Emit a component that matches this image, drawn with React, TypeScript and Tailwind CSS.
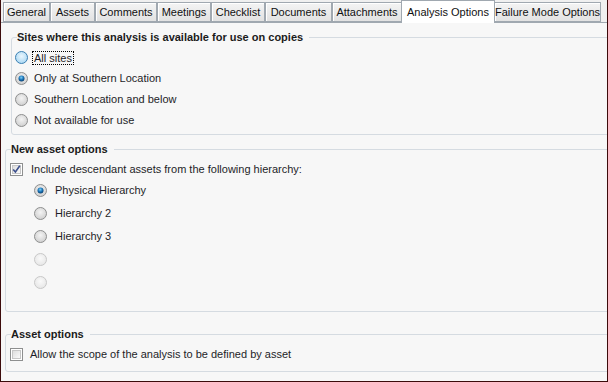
import React from "react";

const tabs = [
  { name: "General", w: 47 },
  { name: "Assets", w: 45 },
  { name: "Comments", w: 62 },
  { name: "Meetings", w: 54 },
  { name: "Checklist", w: 54 },
  { name: "Documents", w: 67 },
  { name: "Attachments", w: 70 },
  { name: "Analysis Options", w: 94 },
  { name: "Failure Mode Options", w: 107 },
];

type RadioState = "normal" | "checked" | "hover" | "disabled";

function Radio({ state }: { state: RadioState }) {
  const ring =
    state === "hover" ? "#3c7fb1" : state === "disabled" ? "#c8c8c8" : "#8e8f8f";
  const inner =
    state === "hover" ? "url(#rh)" : state === "disabled" ? "url(#rd)" : "url(#rn)";
  return (
    <svg width="13" height="13" viewBox="0 0 13 13" className="shrink-0">
      <defs>
        <radialGradient id="rn" cx="50%" cy="40%" r="60%">
          <stop offset="0%" stopColor="#f4f4f4" />
          <stop offset="100%" stopColor="#cfcfcf" />
        </radialGradient>
        <radialGradient id="rh" cx="50%" cy="40%" r="60%">
          <stop offset="0%" stopColor="#eaf6fd" />
          <stop offset="100%" stopColor="#a9d7f3" />
        </radialGradient>
        <radialGradient id="rd" cx="50%" cy="40%" r="60%">
          <stop offset="0%" stopColor="#fafafa" />
          <stop offset="100%" stopColor="#e6e6e6" />
        </radialGradient>
        <radialGradient id="rc" cx="45%" cy="35%" r="65%">
          <stop offset="0%" stopColor="#7fd0f7" />
          <stop offset="55%" stopColor="#1a74b8" />
          <stop offset="100%" stopColor="#0a3d6b" />
        </radialGradient>
      </defs>
      <circle cx="6.5" cy="6.5" r="6" fill={inner} stroke={ring} strokeWidth="1" />
      {state === "checked" && <circle cx="6.5" cy="6.5" r="3" fill="url(#rc)" />}
    </svg>
  );
}

function Checkbox({ checked }: { checked?: boolean }) {
  return (
    <svg width="13" height="13" viewBox="0 0 13 13" className="shrink-0">
      <defs>
        <linearGradient id="cb" x1="0" y1="0" x2="1" y2="1">
          <stop offset="0%" stopColor="#dcdcdc" />
          <stop offset="100%" stopColor="#fbfbfb" />
        </linearGradient>
      </defs>
      <rect x="0.5" y="0.5" width="12" height="12" fill="#fff" stroke="#8e8f8f" />
      <rect x="2.5" y="2.5" width="8" height="8" fill="url(#cb)" stroke="#c6c6c6" />
      {checked && (
        <path d="M3.2 6.4 L5.4 9 L9.8 2.8" fill="none" stroke="#3c4f8c" strokeWidth="1.6" />
      )}
    </svg>
  );
}

function Group({
  title,
  className,
  children,
}: {
  title: string;
  className: string;
  children: React.ReactNode;
}) {
  return (
    <fieldset className={`border border-[#d5dbe1] rounded-[3px] -mr-4 ${className}`}>
      <legend className="ml-[5px] pr-[6px] font-bold text-[11px] leading-[14px] text-[#1b1b1b]">
        {title}
      </legend>
      {children}
    </fieldset>
  );
}

export default function App() {
  return (
    <div
      className="w-[608px] h-[382px] bg-[#f0f0f0] border-l border-r border-b border-[#3c0b0b] overflow-hidden flex flex-col text-[11px] text-[#1e1e28]"
      style={{ fontFamily: '"Liberation Sans", Arial, sans-serif' }}
    >
      {/* Tabs */}
      <div className="h-[23px] flex items-end pl-[2px] shrink-0 relative">
        <div className="absolute left-0 right-0 bottom-0 h-px bg-[#a0a8b0]" />
        {tabs.map((t) => {
          const active = t.name === "Analysis Options";
          return (
            <div
              key={t.name}
              style={{ width: t.w }}
              className={
                active
                  ? "relative z-10 h-[23px] -mx-px bg-white border border-b-0 border-[#a0a8b0] flex items-start pt-[3px] justify-center whitespace-nowrap text-[#111]"
                  : "h-[20px] mb-px border border-[#a0a8b0] bg-gradient-to-b from-[#f4f4f4] to-[#e2e2e2] shadow-[inset_1px_1px_0_#fff] flex items-center justify-center whitespace-nowrap text-[#111]"
              }
            >
              {t.name}
            </div>
          );
        })}
      </div>

      {/* Content */}
      <div className="flex-1 bg-[#f7f7f7] flex flex-col pl-[4px] pb-[9px]">
        <Group title="Sites where this analysis is available for use on copies" className="mt-[7px] ml-[6px] pt-[3px] pb-[3px]">
          <div className="flex flex-col">
            <div className="h-[21px] flex items-center pl-[3px] gap-[4px]">
              <Radio state="hover" />
              <span className="px-[1px] border border-dotted border-black leading-[12px]">All sites</span>
            </div>
            <div className="h-[21px] flex items-center pl-[3px] gap-[6px]">
              <Radio state="checked" />
              <span>Only at Southern Location</span>
            </div>
            <div className="h-[21px] flex items-center pl-[3px] gap-[6px]">
              <Radio state="normal" />
              <span>Southern Location and below</span>
            </div>
            <div className="h-[21px] flex items-center pl-[3px] gap-[6px]">
              <Radio state="normal" />
              <span>Not available for use</span>
            </div>
          </div>
        </Group>

        <Group title="New asset options" className="mt-[7px] pt-[3px] pb-[17px]">
          <div className="h-[20px] flex items-center pl-[4px] gap-[8px]">
            <Checkbox checked />
            <span>Include descendant assets from the following hierarchy:</span>
          </div>
          <div className="flex flex-col pl-[28px]">
            {["Physical Hierarchy", "Hierarchy 2", "Hierarchy 3", "", ""].map((h, i) => (
              <div key={i} className="h-[23px] flex items-center gap-[8px]">
                <Radio state={i === 0 ? "checked" : h ? "normal" : "disabled"} />
                <span>{h}</span>
              </div>
            ))}
          </div>
        </Group>

        <Group title="Asset options" className="mt-[15px] pt-[3px] pb-[7px]">
          <div className="h-[20px] flex items-center pl-[4px] gap-[7px]">
            <Checkbox />
            <span>Allow the scope of the analysis to be defined by asset</span>
          </div>
        </Group>
      </div>
    </div>
  );
}
